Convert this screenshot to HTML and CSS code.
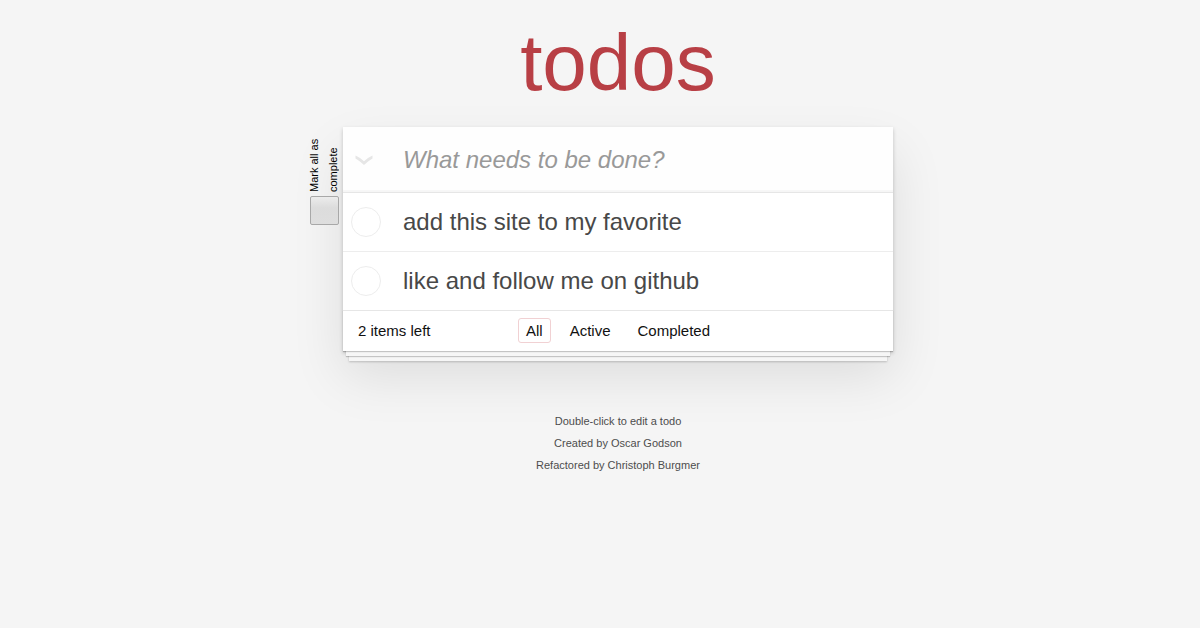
FILE: index.html
```
<!DOCTYPE html>
<html lang="en">
<head>
<meta charset="utf-8">
<title>todos</title>
<link rel="stylesheet" href="styles.css">
</head>
<body>
<main class="page">
  <h1 class="title">todos</h1>
  <section class="card">
    <div class="toggle-all">
      <label class="toggle-label" for="toggle-all">Mark all as complete</label>
      <input class="toggle-box" id="toggle-all" type="checkbox">
    </div>
    <header class="entry">
      <label class="chevron" for="toggle-all" aria-label="Toggle all">
        <svg width="18" height="12" viewBox="0 0 18 12" aria-hidden="true"><path d="M0.500 1.500 Q5 3.500 9 7.200 Q13 3.500 17.500 1.500 L17.500 4.500 Q13 7 9 11 Q5 7 0.500 4.500 Z"/></svg>
      </label>
      <input class="new-todo" type="text" aria-label="New todo" placeholder="What needs to be done?">
    </header>
    <ul class="list">
      <li class="item"><input class="check" id="todo-1" type="checkbox"><label class="text" for="todo-1">add this site to my favorite</label></li>
      <li class="item"><input class="check" id="todo-2" type="checkbox"><label class="text" for="todo-2">like and follow me on github</label></li>
    </ul>
    <footer class="bar">
      <span class="count">2 items left</span>
      <nav class="filters">
        <a class="filter selected" href="#/">All</a>
        <a class="filter" href="#/active">Active</a>
        <a class="filter" href="#/completed">Completed</a>
      </nav>
    </footer>
  </section>
  <footer class="info">
    <p>Double-click to edit a todo</p>
    <p>Created by <a href="#oscar">Oscar Godson</a></p>
    <p>Refactored by <a href="#christoph">Christoph Burgmer</a></p>
  </footer>
</main>
</body>
</html>
```
FILE: styles.css
```
* {
  box-sizing: border-box;
}

body {
  margin: 0;
  background: #f5f5f5;
  color: #111;
  font-family: "Liberation Sans", Arial, sans-serif;
  font-size: 15px;
}

.page {
  padding: 18px 0 0 36px;
}

.title {
  margin: 0 0 19px;
  color: #b83f45;
  font-size: 80px;
  font-weight: 400;
  line-height: 90px;
  text-align: center;
}

.card {
  position: relative;
  max-width: 550px;
  margin: 0 auto;
  background: #fff;
  box-shadow: 0 2px 4px rgba(0, 0, 0, 0.2), 0 25px 50px rgba(0, 0, 0, 0.1);
}

.toggle-all {
  position: absolute;
  top: 10px;
  right: 100%;
  display: flex;
  flex-direction: column;
  align-items: center;
  gap: 4px;
}

.toggle-label {
  height: 55px;
  color: #000;
  font-size: 11px;
  line-height: 19px;
  writing-mode: vertical-rl;
  transform: rotate(180deg);
}

.toggle-box {
  appearance: none;
  width: 29px;
  height: 29px;
  margin: 0;
  border: 1px solid #a8a8a8;
  border-radius: 2px;
  background: linear-gradient(#ececec, #dcdcdc 40%, #dedede);
}

.entry {
  display: flex;
  align-items: center;
  height: 65px;
  background: #fefefe;
  box-shadow: inset 0 -2px 1px rgba(0, 0, 0, 0.03);
}

.chevron {
  display: flex;
  padding: 0 30px 0 12px;
}

.chevron svg {
  fill: #e6e6e6;
}

.new-todo {
  flex: 1;
  min-width: 0;
  padding: 0;
  border: 0;
  outline: 0;
  background: transparent;
  color: #484848;
  font-family: inherit;
  font-size: 24px;
}

.new-todo::placeholder {
  color: #999;
  font-style: italic;
}

.list {
  margin: 0;
  padding: 0;
  border-top: 1px solid #e6e6e6;
  list-style: none;
}

.item {
  display: flex;
  align-items: center;
  gap: 22px;
  height: 59px;
  padding-left: 8px;
  border-bottom: 1px solid #ededed;
}

.item:last-child {
  height: 58px;
  border-bottom: 0;
}

.check {
  appearance: none;
  width: 30px;
  height: 30px;
  margin: 0;
  border: 1px solid #ededed;
  border-radius: 50%;
}

.text {
  color: #484848;
  font-size: 24px;
  line-height: 28px;
}

.bar {
  display: grid;
  grid-template-columns: 1fr auto 1fr;
  align-items: center;
  height: 41px;
  padding: 0 15px 2px;
  border-top: 1px solid #e6e6e6;
  box-shadow: 0 1px 1px rgba(0, 0, 0, 0.2), 0 8px 0 -3px #f6f6f6,
    0 9px 1px -3px rgba(0, 0, 0, 0.2), 0 16px 0 -6px #f6f6f6,
    0 17px 2px -6px rgba(0, 0, 0, 0.2);
}

.filters {
  display: flex;
  gap: 11px;
}

.filter {
  padding: 3px 7px;
  border: 1px solid transparent;
  border-radius: 3px;
  color: inherit;
  line-height: 17px;
  text-decoration: none;
}

.filter.selected {
  border-color: #f1d1d3;
}

.info {
  margin-top: 59px;
  color: #4d4d4d;
  font-size: 11px;
  line-height: 22px;
  text-align: center;
}

.info p {
  margin: 0;
}

.info a {
  color: inherit;
  text-decoration: none;
}
```
